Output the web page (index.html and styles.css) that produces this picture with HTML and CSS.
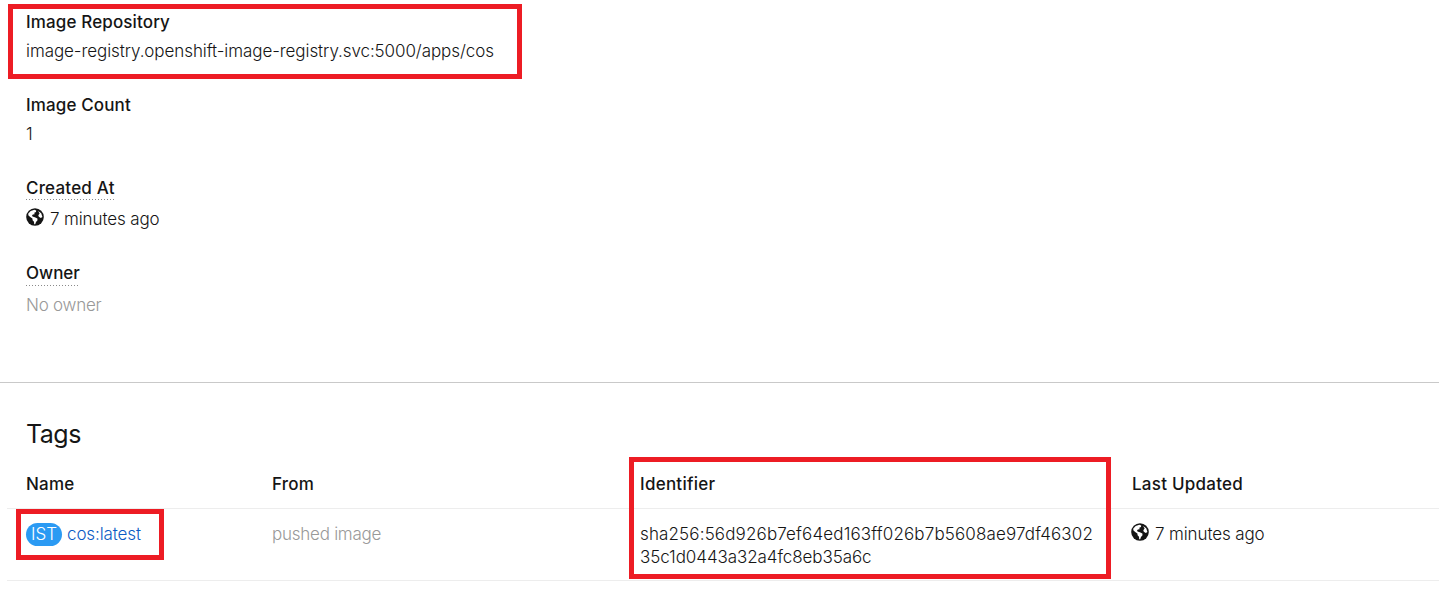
FILE: index.html
```html
<!DOCTYPE html>
<html lang="en">
<head>
<meta charset="utf-8">
<title>Image stream details</title>
<link rel="stylesheet" href="styles.css">
</head>
<body>
<svg width="0" height="0" class="defs">
<symbol id="globe" viewBox="0 0 18 18">
<circle cx="9" cy="9" r="8.8" fill="#151515"/>
<path fill="#fff" d="M2.3 5.6 4.7 3 8.4 1.7 10.2 2.6 10 4 8.3 4.8 8.6 6.2 6.8 6.4 5.9 7.9 7.2 8.8 8.8 9.3 11.4 10.4 11.5 12.2 10 14 9.2 16.2 8.2 16.2 8 13.8 6.6 12.2 6.4 10.4 4.2 9 2.3 7.2Z"/>
<path fill="#fff" d="M12.1 2.9 15.2 5.2 16.4 8.9 14.8 9.9 12.8 8.8 12.3 7.2 13.6 5.6Z"/>
</symbol>
</svg>
<main class="page">
<dl class="details">
<div class="field"><dt><span class="t-repo">Image Repository</span></dt><dd><span class="t-url">image-registry.openshift-image-registry.svc:5000/apps/cos</span></dd></div>
<div class="field"><dt><span class="t-repo">Image Count</span></dt><dd>1</dd></div>
<div class="field created"><dt><span class="hint t-created">Created At</span></dt><dd class="time"><svg class="globe"><use href="#globe"/></svg><span class="t-ago">7 minutes ago</span></dd></div>
<div class="field owner"><dt><span class="hint">Owner</span></dt><dd class="muted">No owner</dd></div>
</dl>
<section class="tags">
<h2>Tags</h2>
<div class="table">
<div class="row head"><span>Name</span><span>From</span><span>Identifier</span><span>Last Updated</span></div>
<div class="row">
<div class="resource"><span class="badge">IST</span><a class="t-ago">cos:latest</a></div>
<div class="muted">pushed image</div>
<div><span class="t-sha">sha256:56d926b7ef64ed163ff026b7b5608ae97df46302</span><br><span class="t-url">35c1d0443a32a4fc8eb35a6c</span></div>
<div class="time"><svg class="globe"><use href="#globe"/></svg><span class="t-ago">7 minutes ago</span></div>
</div>
</div>
</section>
<div class="mark mark-repo"></div>
<div class="mark mark-name"></div>
<div class="mark mark-id"></div>
</main>
</body>
</html>
```
FILE: styles.css
```css
* { box-sizing: border-box; }
body { margin: 0; background: #fff; color: #151515; font: 300 17px/24px Inter, "Open Sans", sans-serif; }
.defs { position: absolute; }
.page { position: relative; height: 597px; overflow: hidden; white-space: nowrap; }
.details { margin: 0; height: 383px; padding: 10px 26px 0; border-bottom: 1px solid #c9c9c9; }
.field { height: 83px; }
dt { font-weight: 500; height: 24px; }
dd { margin: 5px 0 0; }
.hint { display: inline-block; height: 24px; background: repeating-linear-gradient(90deg, #8a8a8a 0 1px, transparent 1px 3px) left bottom / 100% 1px no-repeat; }
.created { height: 85px; }
.created dd { margin-top: 7px; }
.owner .hint { height: 25px; }
.owner dd { margin-top: 8px; }
.time { display: flex; gap: 6px; }
.globe { width: 18px; height: 18px; margin-top: 1px; flex: none; }
.row .time { margin-left: -1px; }
.row .globe { margin-top: 0; }
.muted { color: #999; letter-spacing: -.25px; }
.t-repo { letter-spacing: .13px; }
.t-created { letter-spacing: .2px; }
.t-url { letter-spacing: -.08px; }
.t-ago { letter-spacing: -.12px; }
.t-sha { letter-spacing: .14px; }
.tags { padding: 33px 0 0 7px; }
h2 { margin: 0; padding-left: 19px; font-size: 25px; font-weight: 400; line-height: 36px; letter-spacing: -.5px; }
.table { padding-top: 8px; }
.row { display: grid; grid-template-columns: 246px 368px 492px 1fr; height: 72px; padding: 14px 0 0 19px; border-bottom: 1px solid #ededed; line-height: 23px; }
.row.head { height: 49px; padding-top: 13px; font-weight: 500; letter-spacing: .25px; }
.resource { display: flex; gap: 5px; }
.badge { width: 36px; height: 23px; border-radius: 12px; background: #2b9af3; color: #fff; text-align: center; font-weight: 300; }
a { color: #0b5bc4; }
.mark { position: absolute; border: 5px solid #ed1c24; }
.mark-repo { left: 8px; top: 4px; width: 514px; height: 75px; }
.mark-name { left: 16px; top: 509px; width: 148px; height: 51px; }
.mark-id { left: 629px; top: 457px; width: 482px; height: 122px; }
```
